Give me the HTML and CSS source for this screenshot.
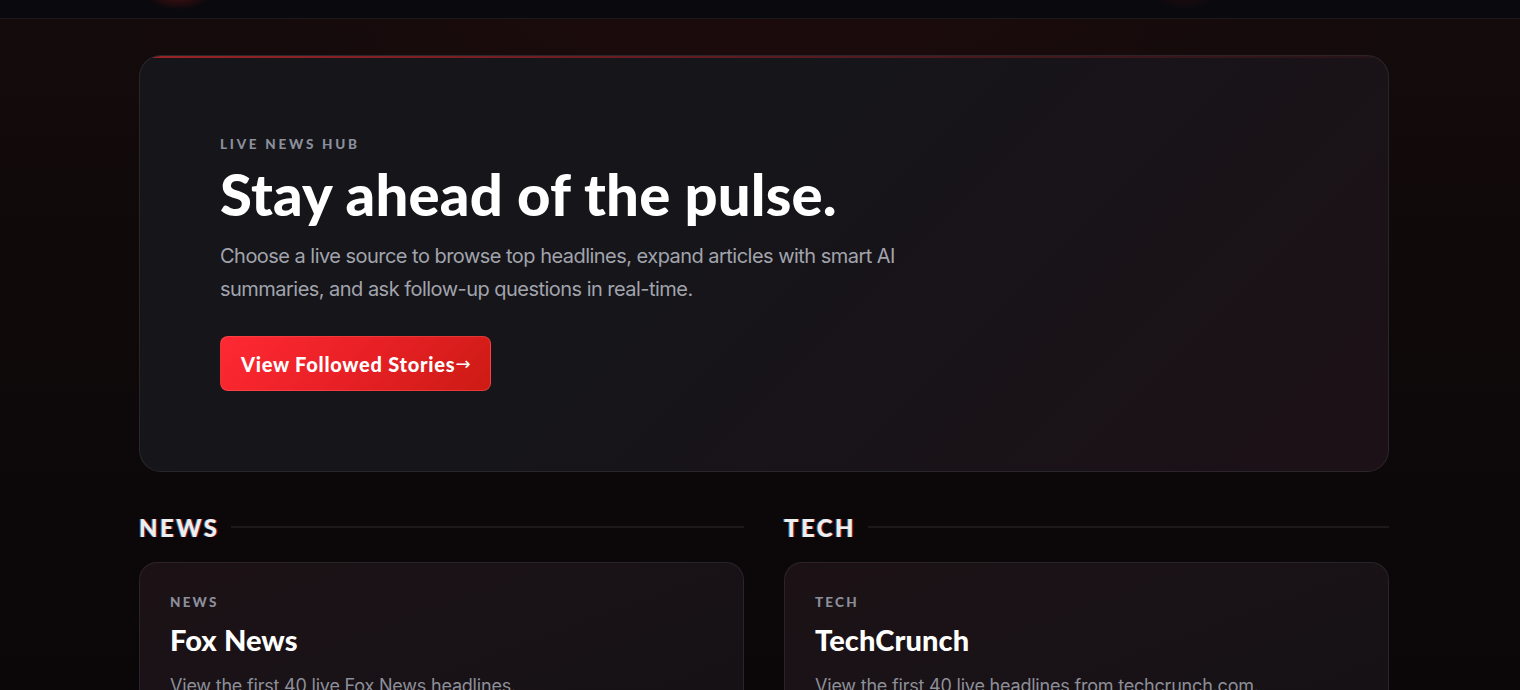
FILE: index.html
```html
<!DOCTYPE html>
<html lang="en">
<head>
<meta charset="utf-8">
<title>Live News Hub</title>
<link rel="stylesheet" href="styles.css">
</head>
<body>
  <header class="topbar">
    <span class="topbar-glow topbar-glow-left"></span>
    <span class="topbar-glow topbar-glow-right"></span>
  </header>

  <main class="page">
    <section class="hero">
      <p class="eyebrow">LIVE NEWS HUB</p>
      <h1 class="hero-title">Stay ahead of the pulse.</h1>
      <p class="hero-copy">Choose a live source to browse top headlines, expand articles with smart AI summaries, and ask follow-up questions in real-time.</p>
      <a class="btn-primary" href="#followed">View Followed Stories<span class="arrow">→</span></a>
    </section>

    <div class="columns">
      <section class="category">
        <div class="category-head">
          <h2 class="category-title">NEWS</h2>
          <span class="category-rule"></span>
        </div>
        <article class="source-card">
          <p class="source-tag">NEWS</p>
          <h3 class="source-name">Fox News</h3>
          <p class="source-desc">View the first 40 live Fox News headlines.</p>
        </article>
      </section>

      <section class="category">
        <div class="category-head">
          <h2 class="category-title">TECH</h2>
          <span class="category-rule"></span>
        </div>
        <article class="source-card">
          <p class="source-tag">TECH</p>
          <h3 class="source-name">TechCrunch</h3>
          <p class="source-desc">View the first 40 live headlines from techcrunch.com.</p>
        </article>
      </section>
    </div>
  </main>
</body>
</html>
```

FILE: styles.css
```css
* {
  box-sizing: border-box;
}

html,
body {
  margin: 0;
  padding: 0;
}

body {
  min-height: 100vh;
  overflow: hidden;
  font-family: "Inter", "Liberation Sans", sans-serif;
  color: #f4f4f6;
  background:
    radial-gradient(ellipse 900px 400px at 50% 0%, rgba(40, 10, 12, 0.45), transparent 70%),
    linear-gradient(180deg, #140b0c 0%, #0d0809 55%, #0a0709 100%);
}

/* top navigation strip (scrolled mostly out of view) */
.topbar {
  position: relative;
  height: 19px;
  background: #0a090d;
  border-bottom: 1px solid #1c191d;
  overflow: hidden;
}

.topbar-glow {
  position: absolute;
  top: -30px;
  width: 70px;
  height: 40px;
  border-radius: 50%;
  background: radial-gradient(closest-side, rgba(150, 25, 25, 0.55), transparent);
}

.topbar-glow-left {
  left: 143px;
}

.topbar-glow-right {
  left: 1150px;
  opacity: 0.35;
}

.page {
  width: 1250px;
  margin: 0 auto;
  padding: 36px 0 0;
  transform: translateX(4px);
}

/* hero panel */
.hero {
  position: relative;
  height: 417px;
  padding: 80px 80px 0;
  border: 1px solid rgba(255, 255, 255, 0.08);
  border-radius: 22px;
  background: linear-gradient(135deg, #15151a 0%, #16151a 45%, #1c1116 100%);
  overflow: hidden;
}

.hero::before {
  content: "";
  position: absolute;
  left: 0;
  right: 0;
  top: 0;
  height: 2px;
  background: linear-gradient(90deg, rgba(200, 40, 40, 0.75) 0%, rgba(170, 35, 40, 0.5) 45%, rgba(90, 25, 30, 0.2) 100%);
}

.eyebrow {
  margin: 0;
  font-family: "Lato", "Liberation Sans", sans-serif;
  font-size: 13.5px;
  font-weight: 900;
  letter-spacing: 2.75px;
  line-height: 16px;
  color: #8b8f9b;
}

.hero-title {
  margin: 7px 0 0;
  font-family: "Lato", "Liberation Sans", sans-serif;
  font-size: 58px;
  font-weight: 900;
  line-height: 70px;
  letter-spacing: 0.2px;
  color: #ffffff;
}

.hero-copy {
  width: 700px;
  margin: 11px 0 0;
  font-size: 20px;
  line-height: 33px;
  letter-spacing: -0.53px;
  color: #a2a4ad;
}

.btn-primary {
  display: inline-flex;
  align-items: center;
  height: 55px;
  margin-top: 30px;
  padding: 0 20px;
  border: 1px solid rgba(255, 110, 110, 0.35);
  border-radius: 8px;
  background: linear-gradient(135deg, #ff2933 0%, #e82026 50%, #cc1b14 100%);
  font-family: "Lato", "Liberation Sans", sans-serif;
  font-size: 20px;
  font-weight: 900;
  letter-spacing: 0.75px;
  color: #ffffff;
  text-decoration: none;
}

.arrow {
  font-family: "DejaVu Sans", sans-serif;
  font-weight: 400;
  font-size: 18px;
  letter-spacing: 0;
}

/* category columns */
.columns {
  display: grid;
  grid-template-columns: 1fr 1fr;
  gap: 40px;
  margin-top: 40px;
}

.category-head {
  display: flex;
  align-items: center;
  gap: 12px;
  height: 30px;
}

.category-title {
  margin: 0;
  font-family: "Lato", "Liberation Sans", sans-serif;
  font-size: 24px;
  font-weight: 900;
  letter-spacing: 2.4px;
  color: #eeeeee;
  text-shadow: -1px 0 rgba(90, 200, 255, 0.55), 1px 0 rgba(255, 40, 60, 0.6);
}

.category-rule {
  flex: 1;
  height: 2px;
  background: rgba(255, 255, 255, 0.07);
}

.source-card {
  height: 200px;
  margin-top: 20px;
  padding: 30px 30px 0;
  border: 1px solid rgba(255, 255, 255, 0.08);
  border-radius: 18px;
  background: linear-gradient(160deg, #1c1216 0%, #181216 55%, #141115 100%);
}

.source-tag {
  margin: 0;
  font-family: "Lato", "Liberation Sans", sans-serif;
  font-size: 13.5px;
  font-weight: 900;
  letter-spacing: 2.2px;
  line-height: 18px;
  color: #8b8f9b;
}

.source-name {
  margin: 12px 0 0;
  font-family: "Lato", "Liberation Sans", sans-serif;
  font-size: 29px;
  font-weight: 900;
  line-height: 34px;
  letter-spacing: 0.1px;
  color: #ffffff;
}

.source-desc {
  margin: 16px 0 0;
  font-size: 18px;
  line-height: 26px;
  letter-spacing: -0.2px;
  color: #8d8f98;
}
```
